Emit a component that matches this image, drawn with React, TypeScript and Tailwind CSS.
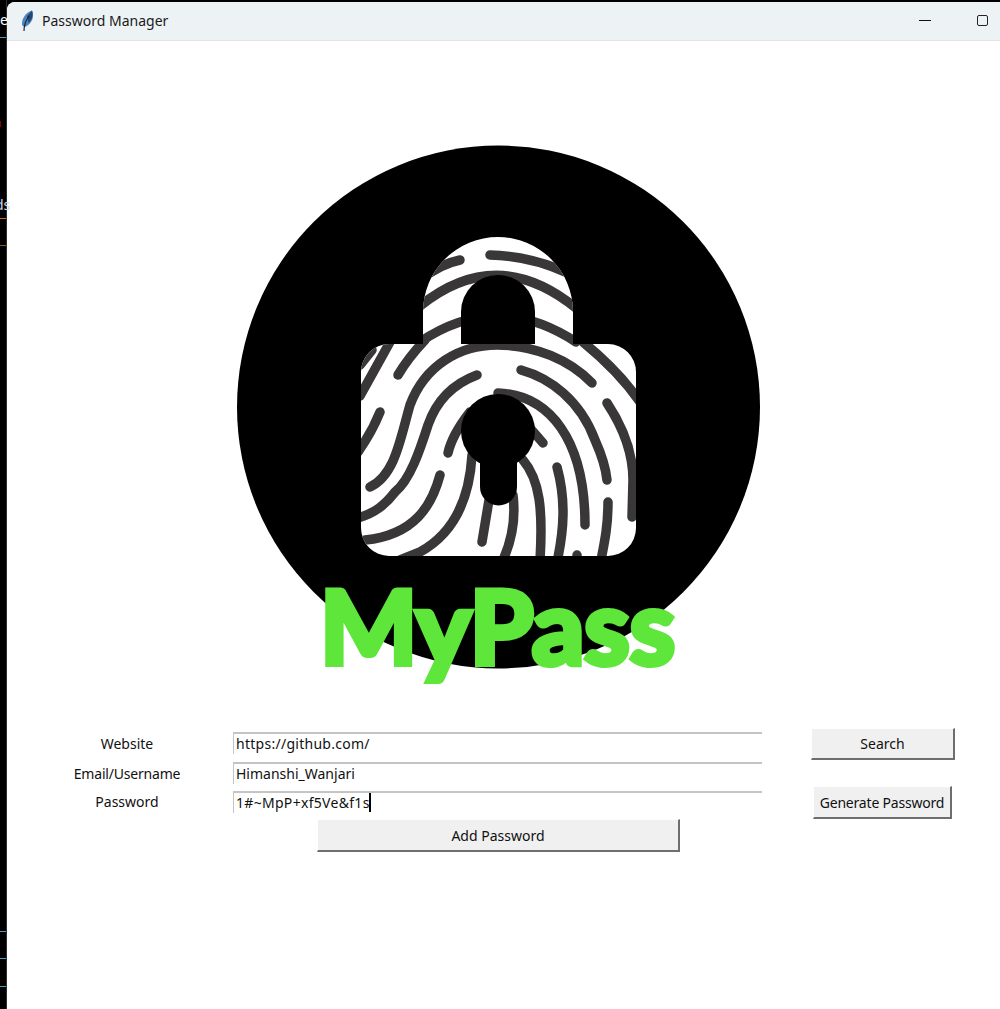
const ridges = [
  "M460 260 Q440 264 420 280",
  "M490 255 Q530 256 565 272",
  "M420 306 Q497 244 576 308",
  "M420 342 Q497 290 576 342",
  "M398 375 Q408 358 425 340",
  "M360 396 L390 342",
  "M360 365 L372 350",
  "M370 487 C395 475 400 440 410 405 C425 365 460 345 497 345 C535 345 570 360 592 383",
  "M583 342 C605 360 625 380 640 402",
  "M521 370 C550 378 580 400 595 440 C603 458 606 470 607 480",
  "M607 403 C625 430 633 455 633 480 L632 517",
  "M477 375 C450 385 435 405 428 425 C420 450 410 480 395 492 C385 505 375 513 358 518",
  "M380 412 Q372 432 358 452",
  "M440 475 C432 505 415 535 365 540",
  "M472 455 C470 490 460 530 420 552 Q410 556 400 560",
  "M448 453 Q452 435 470 412",
  "M530 428 L543 443",
  "M498 393 C550 395 585 440 585 525",
  "M523 460 C540 480 543 510 540 560",
  "M557 467 C566 500 564 530 557 562",
  "M513 495 C516 520 512 540 503 560",
  "M489 500 L482 542",
  "M608 502 C608 525 605 540 601 560",
  "M577 555 L577 562",
];

function Logo() {
  return (
    <svg width="993" height="687" viewBox="7 41 993 687" className="block">
      <defs>
        <clipPath id="lock">
          <path d="M423 344 V312 A75 75 0 0 1 573 312 V344 H608 A28 28 0 0 1 636 372 V528 A28 28 0 0 1 608 556 H389 A28 28 0 0 1 361 528 V372 A28 28 0 0 1 389 344 Z" />
        </clipPath>
      </defs>
      <circle cx="498.5" cy="407" r="261.5" fill="#000" />
      <g clipPath="url(#lock)">
        <rect x="350" y="230" width="300" height="330" fill="#fff" />
        {ridges.map((d) => (
          <path key={d} d={d} fill="none" stroke="#3a3738" strokeWidth="9.5" strokeLinecap="round" />
        ))}
      </g>
      <path d="M461 344 V312 A37 37 0 0 1 535 312 V344 Z" fill="#000" />
      <circle cx="498" cy="431" r="37" fill="#000" />
      <path d="M480 440 H517 V487 A18.5 18.5 0 0 1 480 487 Z" fill="#000" />
      <text
        x="320"
        y="664"
        textLength="355"
        lengthAdjust="spacingAndGlyphs"
        fill="#5ee63b"
        stroke="#5ee63b"
        strokeWidth="6"
        strokeLinejoin="miter"
        fontSize="102"
        fontWeight="700"
        fontFamily="Lato, sans-serif"
      >
        MyPass
      </text>
    </svg>
  );
}

function Feather() {
  return (
    <svg width="14" height="22" viewBox="0 0 14 22" className="shrink-0">
      <path d="M1 15 C0.5 9 4 3 11 0.5 C13.5 6 11.5 13 5 16.5 C3.5 17 2 16.5 1 15 Z" fill="#4a86c5" />
      <path d="M6 6 C8 4 10 2 11 0.5 C12.5 5 11 10 7.5 13 Z" fill="#24466f" />
      <path d="M3 21 C3 15 5 10 8 6" fill="none" stroke="#222" strokeWidth="1.2" />
    </svg>
  );
}

function Entry({ value, caret, className }: { value: string; caret?: boolean; className?: string }) {
  return (
    <div
      className={`h-[22px] w-[529px] border-t-2 border-l border-[#c4c4c4] pl-0.5 flex items-center text-[14px] text-[#111] leading-none ${className ?? ""}`}
    >
      <span>{value}</span>
      {caret && <span className="w-0.5 h-[19px] -ml-px bg-black" />}
    </div>
  );
}

function TkButton({ label, className }: { label: string; className: string }) {
  return (
    <button
      className={`h-[33px] bg-[#f0f0f0] border-t border-l border-white border-r-2 border-b-2 border-r-[#6e6e6e] border-b-[#6e6e6e] text-[14px] text-[#111] ${className}`}
    >
      {label}
    </button>
  );
}

export default function App() {
  return (
    <div className="relative flex w-[1000px] h-[1009px] bg-black overflow-hidden font-['Noto_Sans',sans-serif]">
      <div className="relative w-[7px] shrink-0 text-white text-[14px] border-r border-[#2e2e2e]">
        <span className="absolute left-0 top-[9px]">e</span>
        <div className="absolute left-0 top-[37px] w-full h-px bg-[#4f9fc4]" />
        <div className="absolute left-0 top-[121px] w-px h-[6px] bg-[#8c0000]" />
        <span className="absolute -left-[5px] top-[194px] text-[#c9d8e8]">ds</span>
        <div className="absolute left-0 top-[218px] w-full h-px border-t border-dashed border-[#c8701c]" />
        <div className="absolute left-0 top-[245px] w-full h-px border-t border-dashed border-[#8a5a20]" />
        <div className="absolute left-0 top-[931px] w-full h-px bg-[#4f9fc4]" />
        <div className="absolute left-0 top-[958px] w-full h-px bg-[#4f9fc4]" />
        <div className="absolute left-0 top-[986px] w-full h-px bg-[#4f9fc4]" />
      </div>

      <div className="flex-1 mt-0.5 rounded-tl-lg bg-white overflow-hidden">
        <div className="h-[39px] flex items-center bg-[#edf3f5] border-b border-[#e2e4e5] pl-[14px] pb-px">
          <Feather />
          <span className="ml-[7px] text-[14px] text-[#1a1a1a]">Password Manager</span>
          <div className="ml-auto w-3 h-px bg-[#111] mr-[46px]" />
          <div className="w-[11px] h-[11px] rounded-[2px] border border-[#222] mr-3" />
        </div>

        <Logo />

        <div className="grid grid-cols-[226px_529px_238px] grid-rows-[32px_26px_33px_33px] items-center justify-items-center text-[14px] text-[#111]">
          <span className="pl-[14px] mb-[2px]">Website</span>
          <Entry value="https://github.com/" className="mb-[2px] tracking-[0.27px]" />
          <TkButton label="Search" className="w-[144px] !h-[32px] ml-[4px]" />

          <span className="pl-[14px] -tracking-[0.2px]">Email/Username</span>
          <Entry value="Himanshi_Wanjari" />
          <span />

          <span className="pl-[14px] mb-[2px]">Password</span>
          <Entry value="1#~MpP+xf5Ve&f1s" caret className="mb-[2px] tracking-[0.3px]" />
          <TkButton label="Generate Password" className="w-[139px] ml-[3px] -tracking-[0.2px]" />

          <span />
          <TkButton label="Add Password" className="w-[363px] ml-[2px]" />
          <span />
        </div>
      </div>
    </div>
  );
}
